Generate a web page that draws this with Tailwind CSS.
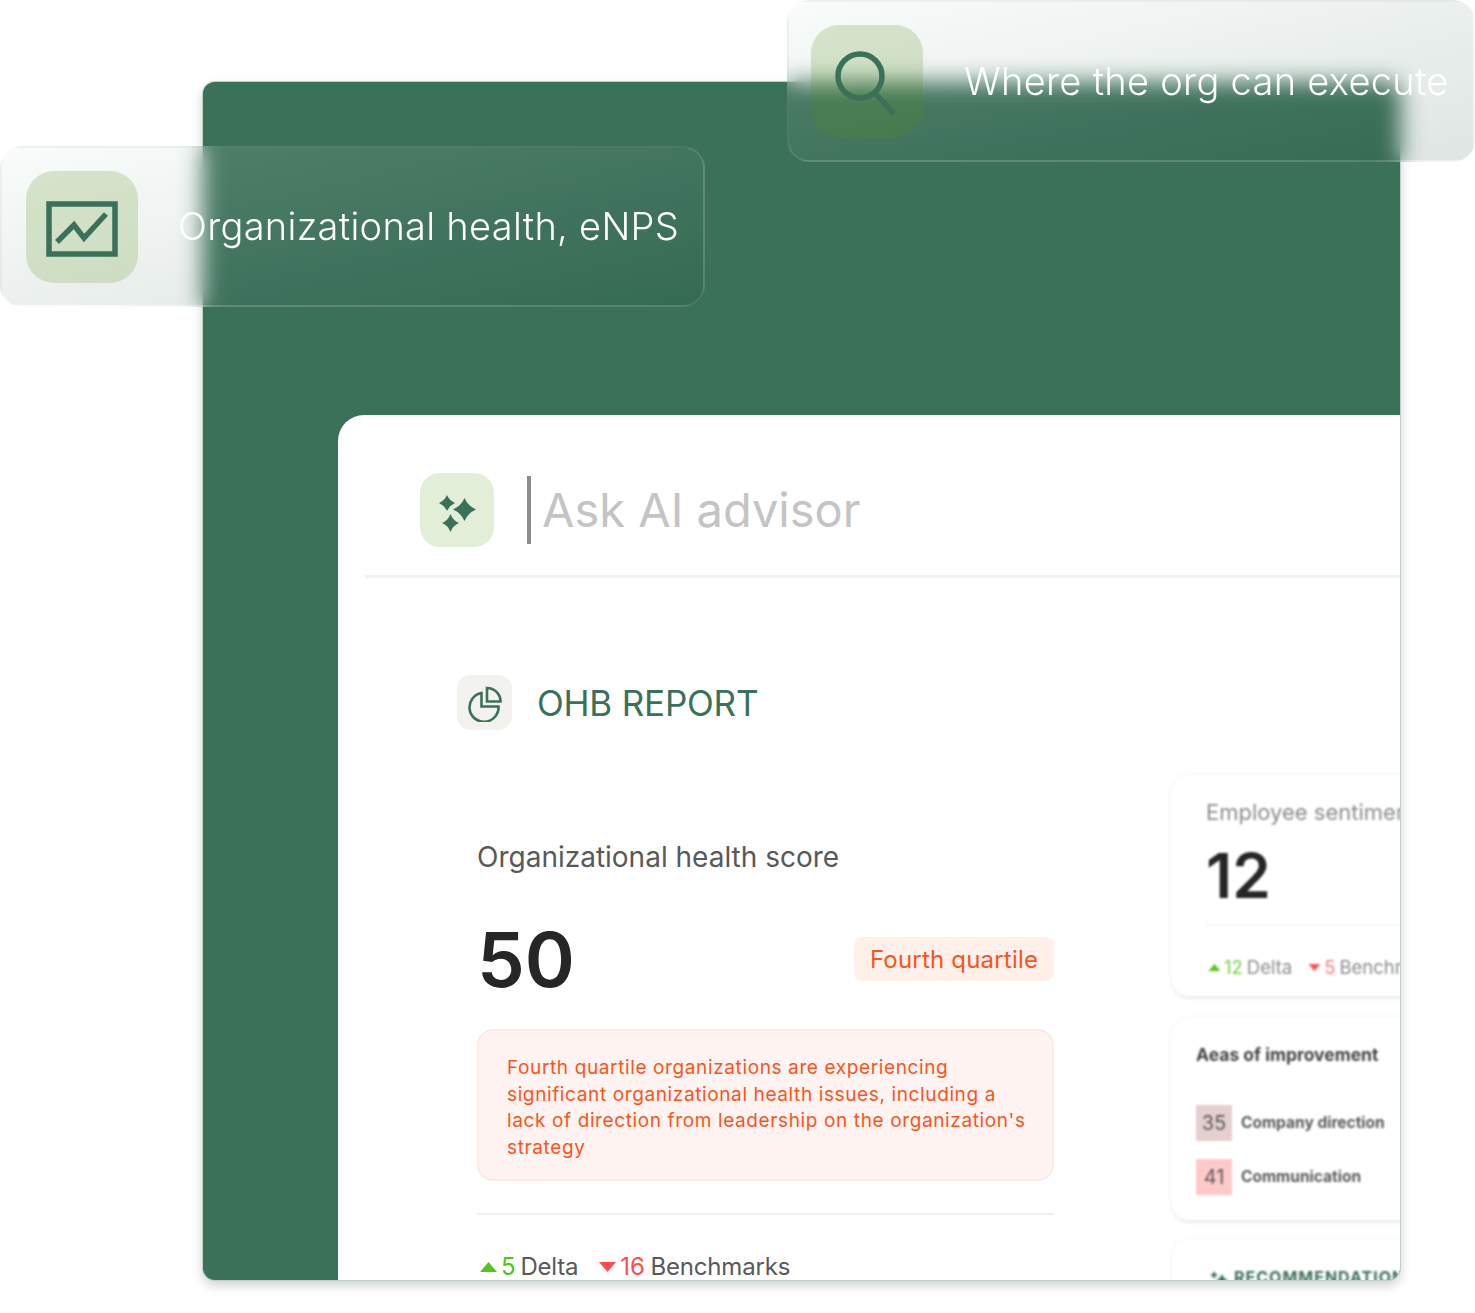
<!DOCTYPE html>
<html lang="en">
<head>
    <meta charset="UTF-8">
    <meta name="viewport" content="width=device-width, initial-scale=1.0">
    <script src="https://cdn.jsdelivr.net/npm/@tailwindcss/browser@4"></script>
    <title>OHB report</title>
</head>
<body class="bg-white">
<div class="relative w-[1475px] h-[1313px] overflow-hidden font-['Inter',sans-serif] pt-[82px] pl-[203px]">

  <!-- green frame -->
  <div class="w-[1197px] h-[1198px] rounded-[12px] bg-[#3b7059] overflow-hidden pt-[333px] pl-[135px] shadow-[0_0_0_1px_#c3cfca,0_5px_12px_rgba(0,0,0,0.2)]">
    <div class="w-[1062px] h-[865px] bg-white rounded-tl-[26px] overflow-hidden">

      <!-- ask bar -->
      <div class="ml-[27px] h-[163px] border-b-[3px] border-[#f2f2f2] flex items-start pt-[58px] pl-[55px]">
        <div class="w-[74px] h-[74px] rounded-[20px] bg-[#e2eed8]">
          <svg width="74" height="74" viewBox="0 0 74 74" fill="#3b7059">
            <path d="M44.500 25 Q48 33 56 36.500 Q48 40 44.500 48 Q41 40 33 36.500 Q41 33 44.500 25Z"/>
            <path d="M27 22 Q29.500 27.500 35 30 Q29.500 32.500 27 38 Q24.500 32.500 19 30 Q24.500 27.500 27 22Z"/>
            <path d="M30.500 41 Q33 47.500 39 50 Q33 52.500 30.500 59 Q28 52.500 22 50 Q28 47.500 30.500 41Z"/>
          </svg>
        </div>
        <div class="ml-[33px] mt-[3px] w-[4px] h-[68px] bg-[#8c8c8c]"></div>
        <div class="ml-[11px] mt-[7px] text-[47px] leading-[60px] text-[#c4c4c4]">Ask AI advisor</div>
      </div>

      <!-- report title -->
      <div class="ml-[119px] mt-[97px] flex items-center">
        <div class="w-[55px] h-[55px] rounded-[14px] bg-[#f3f2ee] flex items-center justify-center">
          <svg width="38" height="38" viewBox="0 0 38 38" fill="none" stroke="#3b7059" stroke-width="2.600">
            <path d="M15.500 9 A14.500 14.500 0 1 0 32.500 22.500 L15.500 22.500 Z"/>
            <path d="M21 4 A13.500 13.500 0 0 1 34.500 17.500 L21 17.500 Z"/>
          </svg>
        </div>
        <div class="ml-[25px] text-[35px] leading-[44px] tracking-[-0.2px] text-[#3b7059]">OHB REPORT</div>
      </div>

      <div class="flex mt-[43px]">
        <!-- score column -->
        <div class="ml-[139px] w-[577px] shrink-0 pt-[67px]">
          <div class="text-[28px] leading-[34px] text-[#595959]">Organizational health score</div>
          <div class="mt-[41px] flex items-center justify-between">
            <div class="text-[76px] leading-[88px] font-semibold text-[#262626]">50</div>
            <div class="w-[200px] h-[44px] rounded-[8px] bg-[#fff1e9] text-[#fa541c] text-[24px] tracking-[0.2px] leading-[46px] text-center">Fourth quartile</div>
          </div>
          <div class="mt-[26px] h-[152px] rounded-[16px] border-2 border-[#ffe9e4] bg-[#fff4f1] pl-[28px] pr-[20px] pt-[24px] text-[19px] leading-[26.500px] tracking-[0.62px] text-[#fa541c]">Fourth quartile organizations are experiencing significant organizational health issues, including a lack of direction from leadership on the organization's strategy</div>
          <div class="mt-[32px] h-[2px] bg-[#f0f0f0]"></div>
          <div class="mt-[37px] ml-[3px] flex items-center text-[24px] leading-[30px] tracking-[-0.2px] text-[#595959]">
            <svg width="17" height="10" viewBox="0 0 17 10" fill="#52c41a"><path d="M8.500 0 L17 10 L0 10Z"/></svg>
            <span class="ml-[4px] text-[#52c41a]">5</span>
            <span class="ml-[5px]">Delta</span>
            <svg class="ml-[21px]" width="17" height="10" viewBox="0 0 17 10" fill="#ff4d4f"><path d="M0 0 L17 0 L8.500 10Z"/></svg>
            <span class="ml-[4px] text-[#ff4d4f]">16</span>
            <span class="ml-[6px]">Benchmarks</span>
          </div>
        </div>

        <!-- side cards, out of focus -->
        <div class="ml-[116px] w-[300px] shrink-0 blur-[1px] flex flex-col gap-[19px]">
          <div class="h-[224px] rounded-[20px] border border-[#f5f5f5] shadow-[0_2px_2px_rgba(0,0,0,0.08)] pl-[35px] pt-[23px]">
            <div class="text-[22px] leading-[30px] text-[#8c8c8c] whitespace-nowrap">Employee sentiment</div>
            <div class="mt-[14px] text-[62px] leading-[70px] font-semibold text-[#262626]">12</div>
            <div class="mt-[14px] h-[1px] bg-[#f0f0f0]"></div>
            <div class="mt-[29px] flex items-center text-[18.500px] leading-[24px] text-[#8c8c8c] whitespace-nowrap">
              <svg class="ml-[2px]" width="13" height="7" viewBox="0 0 17 10" fill="#52c41a"><path d="M8.500 0 L17 10 L0 10Z"/></svg>
              <span class="ml-[3px] text-[#73d13d]">12</span>
              <span class="ml-[4px]">Delta</span>
              <svg class="ml-[16px]" width="13" height="7" viewBox="0 0 17 10" fill="#ff4d4f"><path d="M0 0 L17 0 L8.500 10Z"/></svg>
              <span class="ml-[3px] text-[#ff7875]">5</span>
              <span class="ml-[4px]">Benchmarks</span>
            </div>
          </div>
          <div class="h-[205px] rounded-[20px] border border-[#f5f5f5] shadow-[0_2px_2px_rgba(0,0,0,0.08)] pl-[25px] pt-[25px]">
            <div class="text-[17.500px] leading-[26px] font-bold text-[#434343] whitespace-nowrap">Aeas of improvement</div>
            <div class="mt-[37px] flex items-center">
              <div class="w-[36px] h-[36px] bg-[#e6cfd0] text-[20px] leading-[36px] text-center text-[#595959]">35</div>
              <div class="ml-[9px] text-[15.500px] font-bold text-[#595959] whitespace-nowrap">Company direction</div>
            </div>
            <div class="mt-[18px] flex items-center">
              <div class="w-[36px] h-[36px] bg-[#ffc9c9] text-[20px] leading-[36px] text-center text-[#595959]">41</div>
              <div class="ml-[9px] text-[15.500px] font-bold text-[#595959] whitespace-nowrap">Communication</div>
            </div>
          </div>
          <div class="-mt-[2px] h-[120px] rounded-[20px] border border-[#f5f5f5] pl-[38px] pt-[28px]">
            <div class="flex items-center text-[16px] leading-[20px] font-bold tracking-[1px] text-[#3b7059] whitespace-nowrap">
              <svg width="20" height="14" viewBox="0 0 20 14" fill="#3b7059">
                <path d="M5 1 L6.500 4 L9.500 5 L6.500 6 L5 9 L3.500 6 L0.500 5 L3.500 4Z"/>
                <path d="M13 4 L15 8 L19 9.500 L15 11 L13 14 L11 11 L7 9.500 L11 8Z"/>
              </svg>
              <span class="ml-[5px]">RECOMMENDATIONS</span>
            </div>
          </div>
        </div>
      </div>
    </div>
  </div>

  <!-- floating glass labels -->
  <div class="absolute left-[787px] top-0 w-[688px] h-[162px] rounded-[22px] border-2 border-white/10 bg-linear-to-br from-[#d3ebdd]/15 to-[#154a36]/14 backdrop-blur-[11px] flex items-center pl-[22px]">
    <div class="w-[112px] h-[113px] rounded-[28px] bg-[#558c14]/20 flex items-center justify-center">
      <svg width="72" height="72" viewBox="0 0 72 72" class="-translate-x-[1px] translate-y-[2px]" fill="none" stroke="#3b7059" stroke-width="5.500">
        <circle cx="30" cy="29" r="22"/>
        <path d="M45 46 L64 67"/>
      </svg>
    </div>
    <div class="ml-[41px] text-[38px] leading-[48px] text-white font-light tracking-[0.3px] whitespace-nowrap">Where the org can execute</div>
  </div>

  <div class="absolute left-0 top-[146px] w-[705px] h-[161px] rounded-[22px] border-2 border-white/10 bg-linear-to-br from-[#d3ebdd]/15 to-[#154a36]/14 backdrop-blur-[11px] flex items-center pl-[24px]">
    <div class="w-[112px] h-[112px] rounded-[28px] bg-[#558c14]/20 flex items-center justify-center">
      <svg width="72" height="56" viewBox="0 0 72 56" class="translate-y-[2px]" fill="none" stroke="#3b7059">
        <rect x="3" y="3" width="66" height="50" stroke-width="5.500"/>
        <path d="M11 41 L28 24 L38 37 L60 13" stroke-width="5.500"/>
      </svg>
    </div>
    <div class="ml-[40px] -mt-[1px] text-[38px] leading-[48px] text-white font-light tracking-[0.3px] whitespace-nowrap">Organizational health, eNPS</div>
  </div>
</div>
</body>
</html>
